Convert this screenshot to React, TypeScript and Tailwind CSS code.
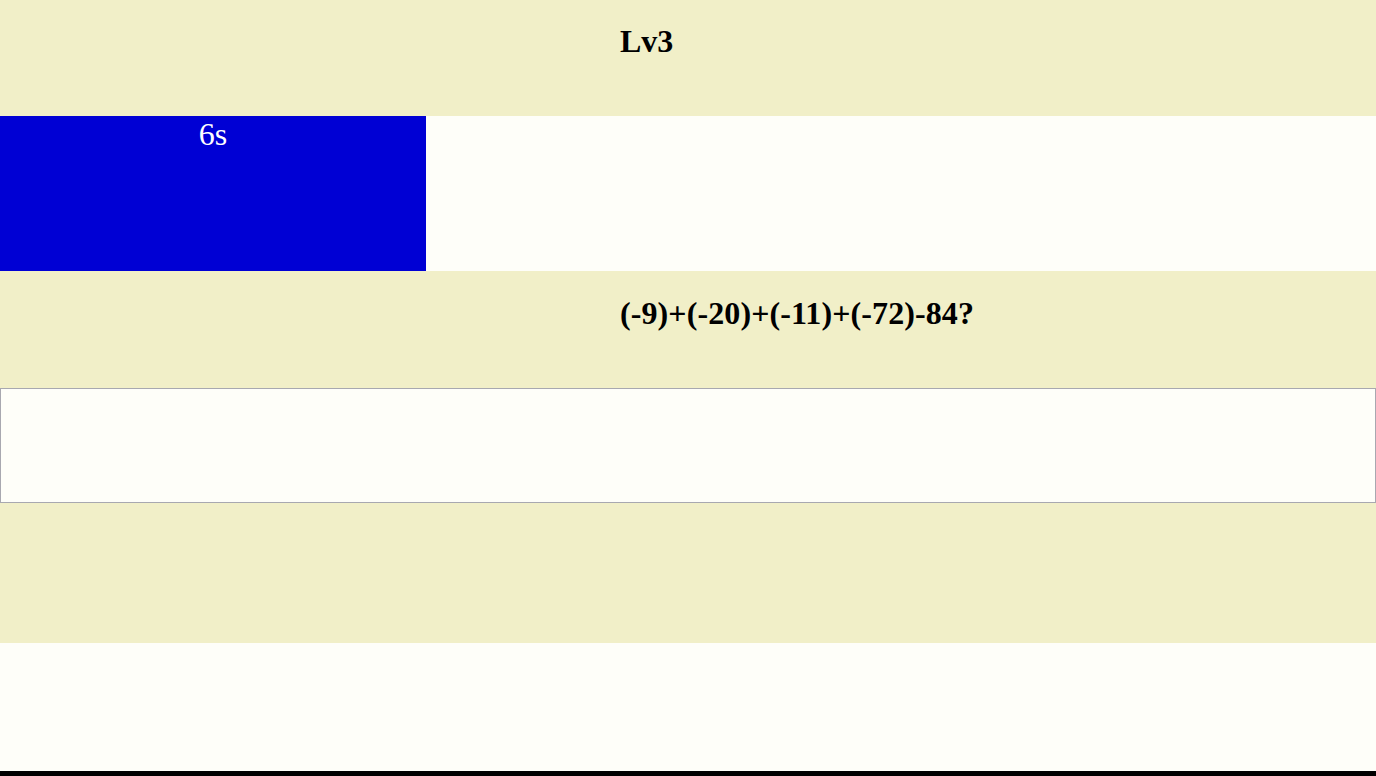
import React, { useState } from "react";

const serif = { fontFamily: '"Liberation Serif", "Times New Roman", serif' };

const App = () => {
    const [answer, setAnswer] = useState("");
    const seconds = 6;
    // remaining time as a fraction of the row
    const progress = 0.3096;

    return (
        <div className="w-[1376px] h-[776px] flex flex-col bg-[#f1efc8] overflow-hidden" style={serif}>
            <div className="h-[116px] pl-[620px]">
                <h1 className="mt-[24px] text-[32px] font-bold leading-[35px] text-black">Lv3</h1>
            </div>

            <div className="h-[155px] bg-[#fefef9] flex">
                <div
                    className="h-full bg-[#0000d4] text-white text-[32px] leading-[35px] text-center pt-[1px]"
                    style={{ width: `${progress * 100}%` }}
                >
                    {seconds}s
                </div>
            </div>

            <div className="h-[117px] pl-[620px]">
                <h2 className="mt-[25px] text-[32px] font-bold leading-[35px] tracking-[0.1px] text-black">
                    (-9)+(-20)+(-11)+(-72)-84?
                </h2>
            </div>

            <input
                value={answer}
                onChange={(e) => setAnswer(e.target.value)}
                className="h-[115px] w-full bg-[#fefef9] border border-[#a8a8b0] outline-none text-[32px] px-2"
            />

            <div className="h-[140px]"></div>

            <div className="h-[128px] bg-[#fefef9]"></div>

            <div className="flex-1 bg-black"></div>
        </div>
    );
};

export default App;
